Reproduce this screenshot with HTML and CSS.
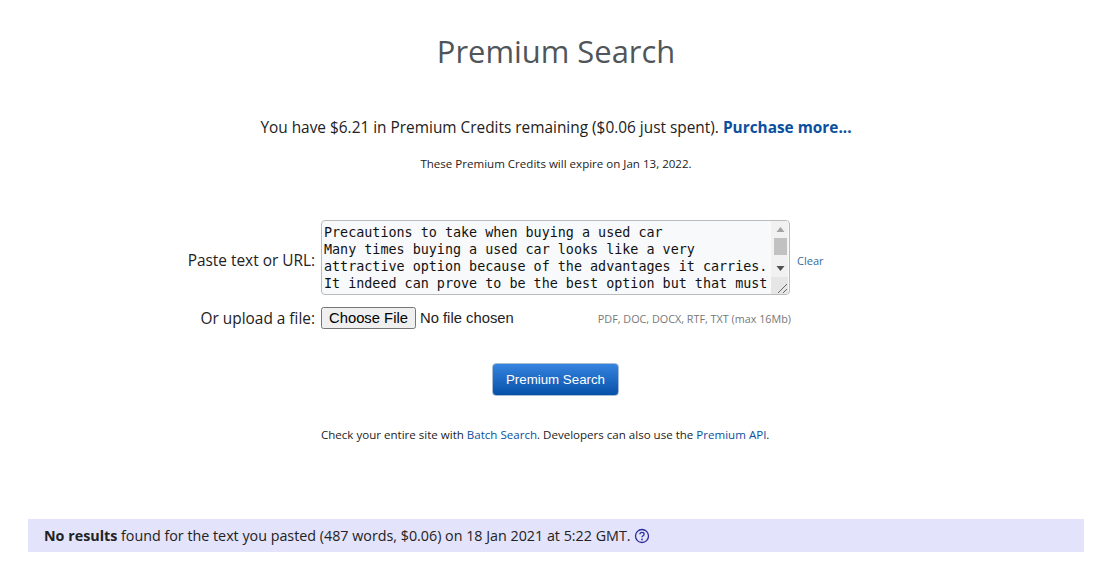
FILE: index.html
```html
<!DOCTYPE html>
<html lang="en">
<head>
    <meta charset="UTF-8">
    <meta name="viewport" content="width=device-width, initial-scale=1.0">
    <title>Premium Search</title>
    <link rel="stylesheet" href="styles.css">
</head>
<body>

    <div class="container">
        <h1>Premium Search</h1>

        <p class="credits">You have $6.21 in Premium Credits remaining ($0.06 just spent). <a href="#" class="purchase">Purchase more...</a></p>
        <p class="expire">These Premium Credits will expire on Jan 13, 2022.</p>

        <form class="search-form">
            <label class="form-label paste-label" for="paste-text">Paste text or URL:</label>
            <div class="paste-wrap">
                <textarea id="paste-text" class="paste-box" spellcheck="false">Precautions to take when buying a used car
Many times buying a used car looks like a very attractive option because of the advantages it carries. It indeed can prove to be the best option but that must be checked properly before you go ahead with the deal.</textarea>
                <!-- Scrollbar drawn by hand, headless browser hides the real one -->
                <div class="scrollbar">
                    <svg class="scroll-arrow" width="17" height="17" viewBox="0 0 17 17" aria-hidden="true"><path d="M9.5 6l4 5h-8z" fill="#a3a3a3"/></svg>
                    <div class="scroll-thumb"></div>
                    <svg class="scroll-arrow" width="17" height="17" viewBox="0 0 17 17" aria-hidden="true"><path d="M5.5 6h8l-4 5z" fill="#505050"/></svg>
                    <svg class="scroll-corner" width="17" height="17" viewBox="0 0 17 17" aria-hidden="true"><path d="M7 16l9-9M12 16l4-4" stroke="#666" fill="none"/></svg>
                </div>
            </div>
            <a href="#" class="clear-link">Clear</a>

            <label class="form-label" for="upload-file">Or upload a file:</label>
            <div class="upload-row">
                <input type="file" id="upload-file" class="file-input">
                <span class="file-types">PDF, DOC, DOCX, RTF, TXT (max 16Mb)</span>
            </div>
        </form>

        <div class="submit-row">
            <button type="button" class="search-button">Premium Search</button>
        </div>

        <p class="batch">Check your entire site with <a href="#">Batch Search</a>. Developers can also use the <a href="#">Premium API</a>.</p>

        <div class="results-bar">
            <span><b>No results</b> found for the text you pasted (487 words, $0.06) on 18 Jan 2021 at 5:22 GMT.</span>
            <svg class="help-icon" width="16" height="16" viewBox="0 0 16 16" aria-hidden="true">
                <circle cx="8" cy="8" r="6.5" fill="none" stroke="#2b2b9e" stroke-width="1.3"/>
                <path d="M5.9 6.3c0-1.2 1-1.9 2.1-1.9s2.1.7 2.1 1.8c0 1.6-2.1 1.6-2.1 3.1" fill="none" stroke="#2b2b9e" stroke-width="1.3"/>
                <circle cx="8" cy="11.4" r=".85" fill="#2b2b9e"/>
            </svg>
        </div>
    </div>

</body>
</html>
```

FILE: styles.css
```css
* {
    box-sizing: border-box;
}

body {
    margin: 0;
    background-color: white;
    color: #222;
    font-family: "Open Sans", sans-serif;
    font-size: 14px;
}

a {
    color: #0b4f9e;
    text-decoration: none;
}

.container {
    margin: 0 16px 0 28px;
    padding-top: 29px;
}

h1 {
    margin: 0;
    color: #50555a;
    font-size: 30.9px;
    font-weight: 400;
    line-height: 44px;
    text-align: center;
}

.credits {
    margin: 43px 0 0;
    font-size: 15.4px;
    line-height: 24px;
    text-align: center;
}

.purchase {
    font-weight: 700;
}

.expire {
    margin: 15px 0 0;
    font-size: 11.55px;
    line-height: 18px;
    text-align: center;
}

.search-form {
    display: grid;
    grid-template-columns: 287px 469px 60px;
    column-gap: 6px;
    row-gap: 12px;
    align-items: center;
    margin-top: 47px;
}

.form-label {
    font-size: 15.4px;
    text-align: right;
}

.paste-label {
    padding-top: 5px;
}

.paste-wrap {
    position: relative;
    width: 469px;
    height: 75px;
}

.paste-box {
    display: block;
    width: 100%;
    height: 100%;
    padding: 3px 19px 3px 2px;
    border: 1px solid #bbb;
    border-radius: 4px;
    background-color: #f7f9fb;
    color: #111;
    font-family: "DejaVu Sans Mono", monospace;
    font-size: 13.4px;
    line-height: 17px;
    overflow: hidden;
    resize: none;
}

.scrollbar {
    position: absolute;
    top: 1px;
    right: 2px;
    bottom: 1px;
    display: flex;
    flex-direction: column;
    width: 17px;
    background-color: #f1f1f1;
}

.scroll-arrow,
.scroll-corner {
    display: block;
    flex-shrink: 0;
}

.scroll-corner {
    background-color: #e6e6e6;
}

.scroll-thumb {
    flex-shrink: 0;
    width: 13px;
    height: 17px;
    margin-bottom: 5px;
    margin-left: 3px;
    background-color: #c1c1c1;
}

.clear-link {
    padding-top: 5px;
    padding-left: 1px;
    color: #3a6a9e;
    font-size: 11px;
}

.upload-row {
    display: flex;
    align-items: center;
    justify-content: space-between;
    grid-column: 2 / 4;
    width: 470px;
}

.file-input {
    width: 240px;
    font-family: "Liberation Sans", sans-serif;
    font-size: 14.8px;
}

.file-types {
    color: #777;
    font-size: 10.8px;
}

.submit-row {
    margin-top: 34px;
    padding-right: 1px;
    text-align: center;
}

.search-button {
    width: 127px;
    height: 33px;
    border: 1px solid #a8bcd4;
    border-radius: 4px;
    background: linear-gradient(#3684e0, #0650a8);
    color: white;
    font-family: "Liberation Sans", sans-serif;
    font-size: 13.3px;
    cursor: pointer;
}

.batch {
    margin: 30px 0 0;
    padding-left: 293px;
    font-size: 11.55px;
    line-height: 18px;
}

.results-bar {
    display: flex;
    align-items: center;
    margin-top: 75px;
    height: 33px;
    padding-left: 16px;
    background-color: #e3e3fb;
    font-size: 14.3px;
}

.results-bar b {
    font-weight: 700;
}

.help-icon {
    margin-left: 3px;
}
```
